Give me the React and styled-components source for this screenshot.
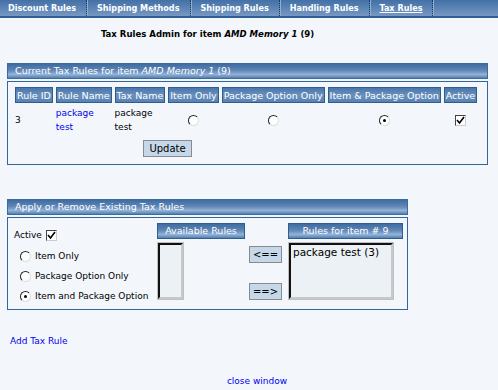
import React from 'react';
import styled, { createGlobalStyle } from 'styled-components';

const GlobalStyle = createGlobalStyle`
  body {
    margin: 0;
    background: #f3f7fb;
    font-family: "DejaVu Sans", Verdana, sans-serif;
    font-size: 9px;
    color: #000;
  }
`;

const Page = styled.div`
  width: 498px;
  min-height: 390px;
  background: #f3f7fb;
`;

const TabBar = styled.div`
  display: flex;
  align-items: center;
  height: 16px;
  background: linear-gradient(#4470a6, #6088b8 60%, #7898c2);
  border-bottom: 2px solid #2f5e93;
`;

const Tab = styled.a`
  display: flex;
  align-items: center;
  height: 16px;
  padding: 0 10px 0 8px;
  margin-left: ${({ $first }) => ($first ? 0 : 2)}px;
  color: #fff;
  font-family: "DejaVu Sans Condensed", "DejaVu Sans", sans-serif;
  font-stretch: condensed;
  font-weight: bold;
  font-size: 9px;
  text-decoration: ${({ $active }) => ($active ? 'underline' : 'none')};
  border-right: 1px dotted #1d3a5c;
  box-shadow: 1px 0 0 #8fb0d6;
`;

const Title = styled.h1`
  margin: 0;
  padding: 10px 0 0 101px;
  height: 40px;
  box-sizing: border-box;
  font-family: "DejaVu Sans Condensed", "DejaVu Sans", sans-serif;
  font-stretch: condensed;
  font-size: 9.5px;
  font-weight: bold;
  em {
    font-style: italic;
  }
`;

const Section = styled.div`
  margin: ${({ $top }) => $top}px 0 0 7px;
  width: ${({ $w }) => $w}px;
`;

const SectionHead = styled.div`
  height: 14px;
  border: 1px solid #3a6a9e;
  background: linear-gradient(#3e6ca1, #5f86b6 45%, #93b2d6 75%, #5480b3);
  color: #fff;
  font-size: 9.5px;
  line-height: 14px;
  padding-left: 7px;
  em {
    font-style: italic;
  }
`;

const SectionBody = styled.div`
  margin-top: 2px;
  border: 1px solid #336699;
  height: ${({ $h }) => $h}px;
  box-sizing: border-box;
  padding: ${({ $pad }) => $pad};
`;

const Table = styled.table`
  border-collapse: separate;
  border-spacing: 3px 0;
  margin-left: 2px;
  td {
    vertical-align: middle;
    padding: 0;
    line-height: 14px;
  }
`;

const HeadCell = styled.th`
  height: 14px;
  padding: 0 1px;
  border: 1px solid #2e5d90;
  background: linear-gradient(#4a76aa, #6a90bd 50%, #5882b4);
  color: #fff;
  font-weight: normal;
  font-size: 9.5px;
  white-space: nowrap;
  text-align: left;
`;

const Link = styled.a`
  color: #0000ee;
  text-decoration: none;
  font-size: 9px;
`;

const Center = styled.td`
  text-align: center;
`;

const Radio = styled.span`
  display: inline-block;
  flex: none;
  width: 11px;
  height: 11px;
  border-radius: 50%;
  box-sizing: border-box;
  border: 1px solid #777;
  border-top-color: #222;
  border-left-color: #222;
  border-right-color: #ddd;
  border-bottom-color: #ddd;
  background: #fff;
  position: relative;
  vertical-align: middle;
  &::after {
    content: '';
    display: ${({ $on }) => ($on ? 'block' : 'none')};
    position: absolute;
    left: 3px;
    top: 3px;
    width: 3px;
    height: 3px;
    border-radius: 50%;
    background: #000;
  }
`;

const Check = styled.span`
  display: inline-block;
  width: 11px;
  height: 11px;
  box-sizing: border-box;
  border: 1px solid #444;
  border-right-color: #ccc;
  border-bottom-color: #ccc;
  background: #fff;
  vertical-align: middle;
  svg {
    display: block;
  }
`;

const Button = styled.button`
  font-family: "DejaVu Sans", sans-serif;
  font-size: 10px;
  background: #c5d8e9;
  border: 1px solid #8a8a8a;
  color: #000;
  padding: 0;
  width: ${({ $w }) => $w}px;
  height: 17px;
`;

const ButtonRow = styled.div`
  padding-left: 133px;
  margin-top: 3px;
`;

const ApplyGrid = styled.div`
  display: flex;
  align-items: flex-start;
`;

const OptionCol = styled.div`
  width: 143px;
  padding-top: 5px;
`;

const ActiveRow = styled.div`
  display: flex;
  align-items: center;
  gap: 4px;
  height: 14px;
  margin-bottom: 4px;
`;

const OptionRow = styled.label`
  display: flex;
  align-items: center;
  gap: 4px;
  height: 20px;
  padding-left: 6px;
`;

const ListCol = styled.div`
  display: flex;
  flex-direction: column;
  align-items: flex-start;
  gap: 4px;
`;

const ListHead = styled.div`
  width: ${({ $w }) => $w}px;
  height: 14px;
  border: 1px solid #2e5d90;
  background: linear-gradient(#3e6ca1, #5f86b6 45%, #93b2d6 75%, #5480b3);
  color: #fff;
  font-size: 9.5px;
  line-height: 14px;
  text-align: center;
`;

const ListBox = styled.div`
  width: ${({ $w }) => $w}px;
  height: 56px;
  margin-left: 1px;
  box-sizing: border-box;
  border: 2px solid #111;
  border-right-color: #c8c8c8;
  border-bottom-color: #c8c8c8;
  outline: 1px solid #c0c0c0;
  background: #ebf1f5;
  font-size: 10.5px;
  padding: 1px 2px;
`;

const ArrowCol = styled.div`
  display: flex;
  flex-direction: column;
  gap: 20px;
  padding-top: 23px;
  margin: 0 6px 0 4px;
`;

const Footer = styled.div`
  padding: 26px 0 0 10px;
`;

const CloseRow = styled.div`
  text-align: center;
  padding: 30px 0 0 16px;
`;

const tick = (
  <svg width="9" height="9" viewBox="0 0 9 9">
    <path d="M1 4 L3.5 7 L8 1" stroke="#000" strokeWidth="1.6" fill="none" />
  </svg>
);

const headers = [
  'Rule ID',
  'Rule Name',
  'Tax Name',
  'Item Only',
  'Package Option Only',
  'Item & Package Option',
  'Active',
];

export default function App() {
  return (
    <Page>
      <GlobalStyle />
      <TabBar>
        <Tab $first>Discount Rules</Tab>
        <Tab>Shipping Methods</Tab>
        <Tab>Shipping Rules</Tab>
        <Tab>Handling Rules</Tab>
        <Tab $active>Tax Rules</Tab>
      </TabBar>
      <Title>
        Tax Rules Admin for item <em>AMD Memory 1</em> (9)
      </Title>

      <Section $w={481} $top={5}>
        <SectionHead>
          Current Tax Rules for item <em>AMD Memory 1</em> (9)
        </SectionHead>
        <SectionBody $h={84} $pad="5px 0 0 2px">
          <Table>
            <thead>
              <tr>
                {headers.map((h) => (
                  <HeadCell key={h}>{h}</HeadCell>
                ))}
              </tr>
            </thead>
            <tbody>
              <tr style={{ height: 34 }}>
                <td>3</td>
                <td>
                  <Link>package</Link>
                  <br />
                  <Link>test</Link>
                </td>
                <td>
                  package
                  <br />
                  test
                </td>
                <Center>
                  <Radio />
                </Center>
                <Center>
                  <Radio />
                </Center>
                <Center>
                  <Radio $on />
                </Center>
                <Center>
                  <Check>{tick}</Check>
                </Center>
              </tr>
            </tbody>
          </Table>
          <ButtonRow>
            <Button $w={49}>Update</Button>
          </ButtonRow>
        </SectionBody>
      </Section>

      <Section $w={401} $top={34}>
        <SectionHead>Apply or Remove Existing Tax Rules</SectionHead>
        <SectionBody $h={93} $pad="5px 0 0 6px">
          <ApplyGrid>
            <OptionCol>
              <ActiveRow>
                Active <Check>{tick}</Check>
              </ActiveRow>
              <OptionRow>
                <Radio /> Item Only
              </OptionRow>
              <OptionRow>
                <Radio /> Package Option Only
              </OptionRow>
              <OptionRow>
                <Radio $on /> Item and Package Option
              </OptionRow>
            </OptionCol>
            <ListCol>
              <ListHead $w={86}>Available Rules</ListHead>
              <ListBox $w={25} />
            </ListCol>
            <ArrowCol>
              <Button $w={33}>&lt;==</Button>
              <Button $w={33}>==&gt;</Button>
            </ArrowCol>
            <ListCol>
              <ListHead $w={113}>Rules for item # 9</ListHead>
              <ListBox $w={104}>package test (3)</ListBox>
            </ListCol>
          </ApplyGrid>
        </SectionBody>
      </Section>

      <Footer>
        <Link>Add Tax Rule</Link>
      </Footer>
      <CloseRow>
        <Link>close window</Link>
      </CloseRow>
    </Page>
  );
}
